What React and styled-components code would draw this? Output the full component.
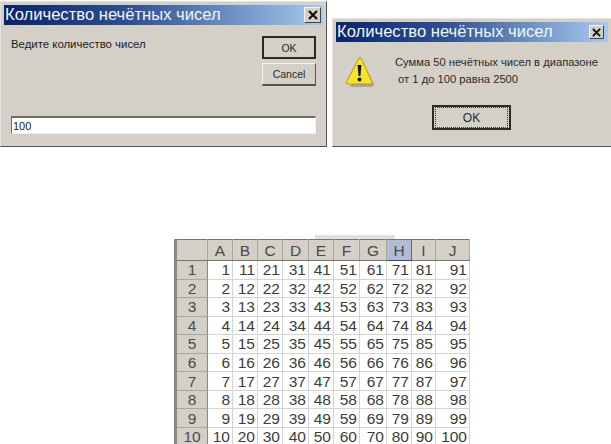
import React from 'react';
import styled, { createGlobalStyle } from 'styled-components';

const GlobalStyle = createGlobalStyle`
    html, body {
        margin: 0;
        padding: 0;
        background: #fff;
        overflow: hidden;
    }
    * {
        box-sizing: border-box;
    }
`;

const Page = styled.div`
    width: 611px;
    height: 444px;
    overflow: hidden;
    font-family: "Liberation Sans", Arial, sans-serif;
`;

const DialogRow = styled.div`
    display: flex;
    align-items: flex-end;
    gap: 5px;
    height: 147px;
`;

const Dialog = styled.div`
    width: ${(p) => p.$width}px;
    height: ${(p) => p.$height}px;
    flex: none;
    display: flex;
    flex-direction: column;
    padding: 3px;
    background: #d4d0c8;
    border: 1px solid;
    border-color: #e4e2dc #55534f #55534f #e4e2dc;
    border-right-width: ${(p) => (p.$open ? 0 : 1)}px;
`;

const TitleBar = styled.div`
    height: ${(p) => p.$height}px;
    flex: none;
    display: flex;
    align-items: center;
    justify-content: space-between;
    padding: 0 ${(p) => p.$padRight}px 0 1px;
    background: linear-gradient(90deg, #0a246a 0%, #2f5191 40%, #a6caf0 100%);
    color: #f2f5fa;
    font-size: 16.6px;
    line-height: 1;
    white-space: nowrap;
`;

const CloseButton = styled.div`
    width: ${(p) => p.$size}px;
    height: ${(p) => p.$size - 1}px;
    flex: none;
    display: flex;
    align-items: center;
    justify-content: center;
    background: #d4d0c8;
    border: 1px solid;
    border-color: #f4f3ef #45433f #45433f #f4f3ef;
`;

const PromptBody = styled.div`
    flex: 1;
    display: flex;
    flex-direction: column;
    padding: 10px 7px 0 7px;
`;

const PromptTop = styled.div`
    display: flex;
    justify-content: space-between;
    height: 81px;
`;

const Label = styled.div`
    margin-top: 3px;
    font-size: 11.4px;
    color: #1c1c1c;
`;

const ButtonColumn = styled.div`
    width: 54px;
    margin-top: 1px;
    display: flex;
    flex-direction: column;
    gap: 4px;
`;

const Button = styled.div`
    height: ${(p) => p.$height}px;
    width: ${(p) => p.$width || 'auto'};
    display: flex;
    align-items: center;
    justify-content: center;
    font-size: 10.5px;
    color: #2a2a2a;
    background: #d4d0c8;
    border: ${(p) => (p.$strong ? '2px' : '1px')} solid;
    border-color: ${(p) => (p.$strong ? '#2b2a28' : '#f4f3ef #55534f #55534f #f4f3ef')};
    box-shadow: ${(p) => (p.$strong ? 'none' : '0 1px 0 #55534f')};
`;

const DottedFocus = styled.div`
    width: 100%;
    height: 100%;
    display: flex;
    align-items: center;
    justify-content: center;
    border: 1px dotted #333;
    margin: 1px;
    font-size: 12px;
`;

const Input = styled.div`
    height: 18px;
    padding: 1px 1px 0 1px;
    font-size: 11px;
    line-height: 15px;
    color: #222;
    background: #fff;
    border: 1px solid;
    border-color: #6f6d68 #f0efeb #f0efeb #6f6d68;
    border-top-width: 2px;
`;

const MessageBody = styled.div`
    flex: 1;
    display: flex;
    flex-direction: column;
    padding: 12px 0 0 0;
`;

const MessageTop = styled.div`
    display: flex;
    height: 42px;
`;

const IconSlot = styled.div`
    width: 59px;
    padding: 2px 0 0 9px;
    flex: none;
`;

const MessageText = styled.div`
    font-size: 11.2px;
    line-height: 17px;
    color: #2a2a2a;
    white-space: pre;
`;

const MessageActions = styled.div`
    margin-top: 9px;
    padding-left: 96px;
`;

const Sheet = styled.div`
    margin: 88px 0 0 174px;
    width: 295px;
`;

const SheetEdge = styled.div`
    width: 80px;
    height: 4px;
    margin-left: 141px;
    background: #e3e1db;
`;

const Table = styled.table`
    border-collapse: collapse;
    table-layout: fixed;
    width: 295px;
    font-size: 15.5px;
    line-height: 15px;
    color: #3c3c3c;
    border-top: 1px solid #77756f;
    border-left: 3px solid #8a8882;
`;

const HeadCell = styled.th`
    height: 21px;
    padding: 0;
    font-weight: 400;
    text-align: center;
    background: ${(p) => (p.$active ? '#b2bbd6' : '#d4d0c8')};
    border-right: 1px solid ${(p) => (p.$active ? '#5d6a94' : '#aaa79f')};
    border-bottom: 1px solid ${(p) => (p.$active ? '#39477a' : '#77756f')};
    color: #4a4a4a;
`;

const RowHead = styled.th`
    height: 18.55px;
    padding: 0;
    font-weight: 400;
    text-align: center;
    background: #d4d0c8;
    color: #4a4a4a;
    border-right: 1px solid #8a8882;
    border-bottom: 1px solid #aaa79f;
`;

const Cell = styled.td`
    padding: 0 2px 0 0;
    text-align: right;
    background: #fff;
    border-right: 1px solid #d4d4d4;
    border-bottom: 1px solid #d4d4d4;
`;

function CloseIcon({ size }) {
    return (
        <svg width={size} height={size} viewBox="0 0 10 10">
            <path d="M1 1 L9 9 M9 1 L1 9" stroke="#111" strokeWidth="2.2" fill="none" />
        </svg>
    );
}

function WarningIcon() {
    return (
        <svg width="30" height="32" viewBox="0 0 30 32">
            <path d="M16 3 L29 28 Q29 31 26 31 L5 31 Z" fill="#8d8a7c" opacity="0.6" />
            <path
                d="M14 2 Q15 1 16 2 L27 26 Q27.5 28 25.5 28 L3 28 Q1 28 1.5 26 Z"
                fill="#f7e32a"
                stroke="#b39a12"
                strokeWidth="1"
            />
            <path d="M12.6 9 L16.4 9 L15.4 20 L13.6 20 Z" fill="#111" />
            <circle cx="14.5" cy="23.6" r="2" fill="#111" />
        </svg>
    );
}

const columns = ['A', 'B', 'C', 'D', 'E', 'F', 'G', 'H', 'I', 'J'];
const widths = [32, 25, 25, 25, 26, 25, 26, 27, 25, 24, 34];
const rows = Array.from({ length: 10 }, (_, i) => i + 1);

export default function App() {
    return (
        <Page>
            <GlobalStyle />
            <DialogRow>
                <Dialog $width={327} $height={146}>
                    <TitleBar $height={20} $padRight={2}>
                        Количество нечётных чисел
                        <CloseButton $size={17}>
                            <CloseIcon size={10} />
                        </CloseButton>
                    </TitleBar>
                    <PromptBody>
                        <PromptTop>
                            <Label>Ведите количество чисел</Label>
                            <ButtonColumn>
                                <Button $strong $height={23}>OK</Button>
                                <Button $height={22}>Cancel</Button>
                            </ButtonColumn>
                        </PromptTop>
                        <Input>100</Input>
                    </PromptBody>
                </Dialog>
                <Dialog $width={279} $height={129} $open>
                    <TitleBar $height={20} $padRight={4}>
                        Количество нечётных чисел
                        <CloseButton $size={15}>
                            <CloseIcon size={9} />
                        </CloseButton>
                    </TitleBar>
                    <MessageBody>
                        <MessageTop>
                            <IconSlot>
                                <WarningIcon />
                            </IconSlot>
                            <MessageText>{'Сумма 50 нечётных чисел в диапазоне\n от 1 до 100 равна 2500'}</MessageText>
                        </MessageTop>
                        <MessageActions>
                            <Button $strong $height={25} $width="79px">
                                <DottedFocus>OK</DottedFocus>
                            </Button>
                        </MessageActions>
                    </MessageBody>
                </Dialog>
            </DialogRow>
            <Sheet>
                <SheetEdge />
                <Table>
                    <colgroup>
                        {widths.map((w, i) => (
                            <col key={i} width={w} />
                        ))}
                    </colgroup>
                    <thead>
                        <tr>
                            <HeadCell />
                            {columns.map((c) => (
                                <HeadCell key={c} $active={c === 'H'}>{c}</HeadCell>
                            ))}
                        </tr>
                    </thead>
                    <tbody>
                        {rows.map((r) => (
                            <tr key={r}>
                                <RowHead>{r}</RowHead>
                                {columns.map((c, i) => (
                                    <Cell key={c}>{r + i * 10}</Cell>
                                ))}
                            </tr>
                        ))}
                    </tbody>
                </Table>
            </Sheet>
        </Page>
    );
}
